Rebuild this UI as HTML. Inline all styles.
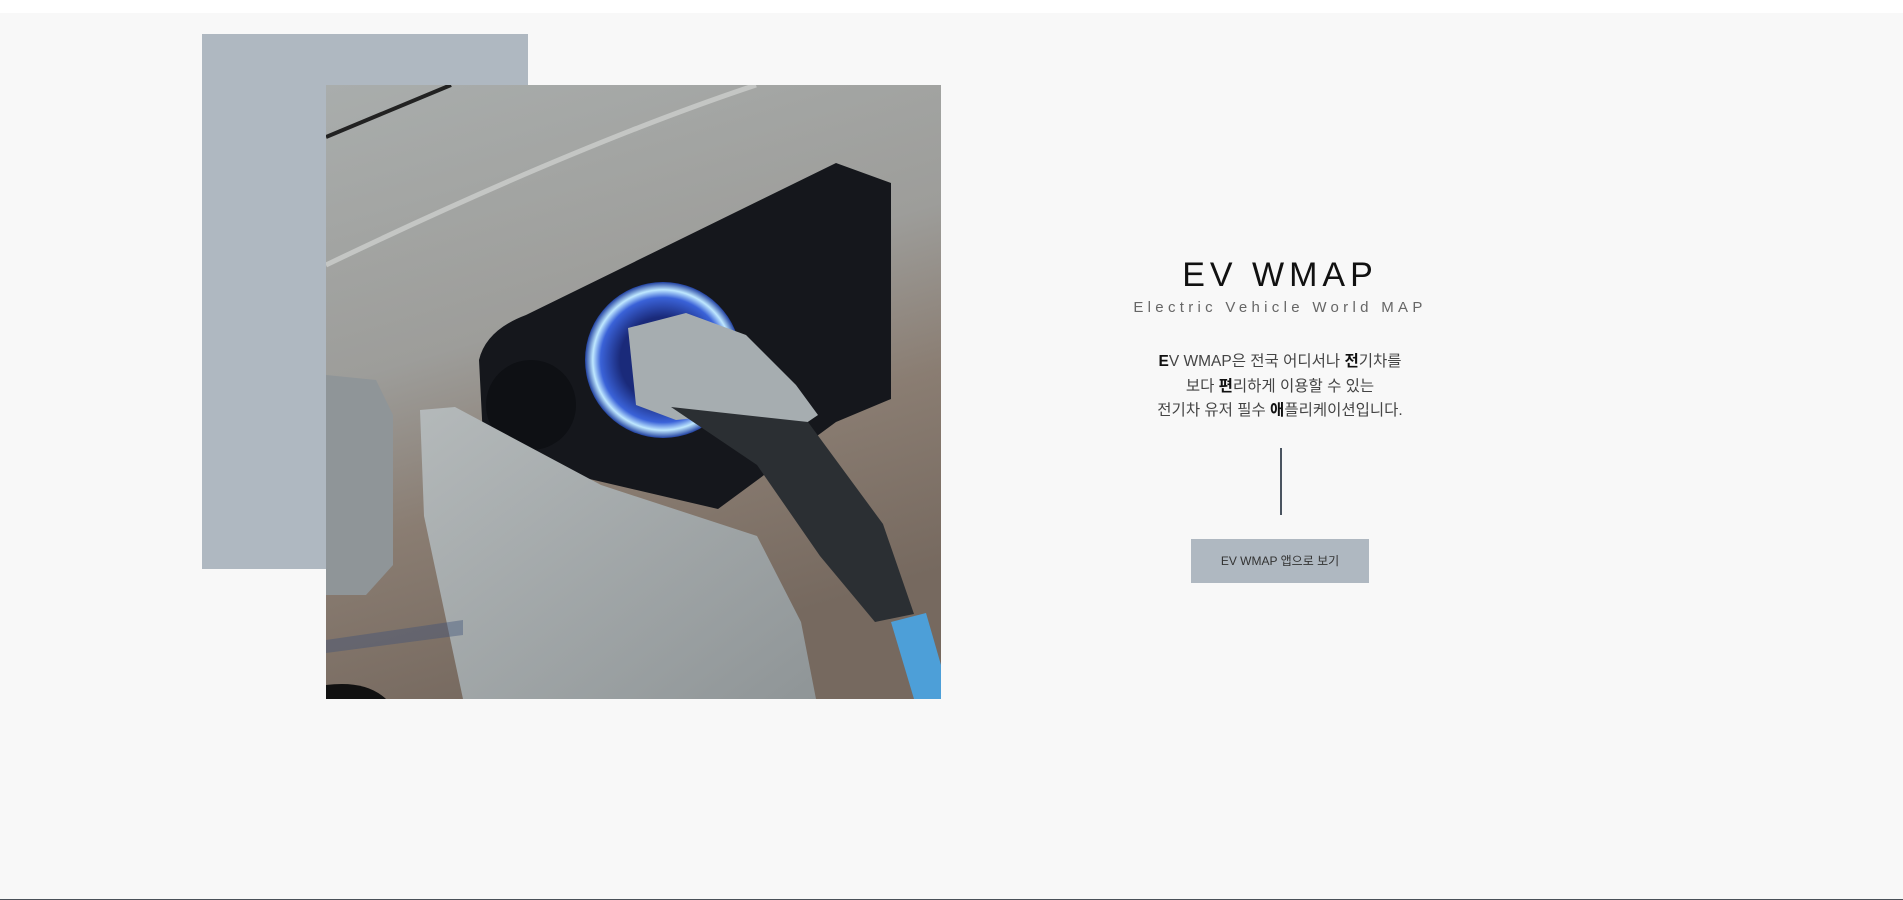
<!DOCTYPE html>
<html><head><meta charset="utf-8"><style>
html,body{margin:0;padding:0}
body{width:1903px;height:900px;background:#f8f8f8;position:relative;overflow:hidden;font-family:"Liberation Sans","Noto Sans CJK KR",sans-serif}
.top{position:absolute;left:0;top:0;width:1903px;height:13px;background:#fff}
.bot{position:absolute;left:0;top:899px;width:1903px;height:1px;background:#4a5058}
.gray{position:absolute;left:202px;top:34px;width:326px;height:535px;background:#afb8c1}
.photo{position:absolute;left:326px;top:85px;width:615px;height:614px}
.t{position:absolute;left:1030px;width:500px;text-align:center}
h1{margin:0;position:absolute;top:256px;left:1080px;width:400px;text-align:center;font-weight:400;font-size:34px;letter-spacing:5px;color:#111}
.sub{top:299px;font-size:15px;letter-spacing:4.3px;color:#666}
.p{top:350px;font-size:15.5px;line-height:24.5px;color:#444}
.p b{color:#111}
.line{position:absolute;left:1280px;top:448px;width:2px;height:67px;background:#4a5460}
.btn{position:absolute;left:1191px;top:539px;width:178px;height:44px;background:#afb8c1;color:#333;font-size:12px;line-height:44px;text-align:center}
</style></head><body>
<div class="top"></div>
<div class="gray"></div>
<svg class="photo" viewBox="0 0 615 614" width="615" height="614">
<defs>
<linearGradient id="bg" x1="0" y1="0" x2="0.3" y2="1">
<stop offset="0" stop-color="#a9adac"/><stop offset="0.45" stop-color="#9d9d9a"/><stop offset="0.7" stop-color="#8a7d72"/><stop offset="1" stop-color="#76695f"/></linearGradient>
<linearGradient id="flap" x1="0" y1="0" x2="1" y2="1"><stop offset="0" stop-color="#b4b9ba"/><stop offset="1" stop-color="#8f9597"/></linearGradient>
<radialGradient id="ring" cx="0.5" cy="0.5" r="0.5"><stop offset="0.55" stop-color="#1a2a7a"/><stop offset="0.8" stop-color="#3a62d8"/><stop offset="0.9" stop-color="#bfe8ff"/><stop offset="1" stop-color="#2040a0"/></radialGradient>
</defs>
<rect width="615" height="614" fill="url(#bg)"/>
<path d="M0 52 L125 0" stroke="#222" stroke-width="4"/>
<path d="M0 180 Q250 60 430 0" stroke="#c4c6c4" stroke-width="5" fill="none"/>
<path d="M153 275 Q160 245 200 230 L510 78 L565 98 L565 314 L510 337 L392 424 L255 392 L157 353Z" fill="#15171c"/>
<circle cx="337" cy="275" r="78" fill="url(#ring)"/>
<circle cx="205" cy="320" r="45" fill="#0e1014"/>
<path d="M302 243 L360 228 L420 250 L470 300 L492 330 L470 345 L400 330 L350 335 L310 320Z" fill="#a6adb0"/>
<path d="M345 322 L482 337 L557 439 L588 529 L549 537 L494 471 L431 380Z" fill="#2b2f33"/>
<path d="M565 537 L600 528 L615 580 L615 614 L588 614Z" fill="#4d9fd8"/>
<path d="M0 290 L50 295 L67 330 L67 480 L40 510 L0 510Z" fill="#8f9598"/>
<path d="M94 325 L129 322 L275 400 L431 451 L475 537 L490 614 L137 614 L98 431Z" fill="url(#flap)"/>
<path d="M0 555 L137 535 L137 550 L0 568Z" fill="#3c4f78" opacity="0.4"/>
<path d="M0 600 Q40 595 60 614 L0 614Z" fill="#111"/>
</svg>
<h1>EV WMAP</h1>
<div class="t sub">Electric Vehicle World MAP</div>
<div class="t p"><b>E</b>V WMAP은 전국 어디서나 <b>전</b>기차를<br>보다 <b>편</b>리하게 이용할 수 있는<br>전기차 유저 필수 <b>애</b>플리케이션입니다.</div>
<div class="line"></div>
<div class="btn">EV WMAP 앱으로 보기</div>
<div class="bot"></div>
</body></html>
